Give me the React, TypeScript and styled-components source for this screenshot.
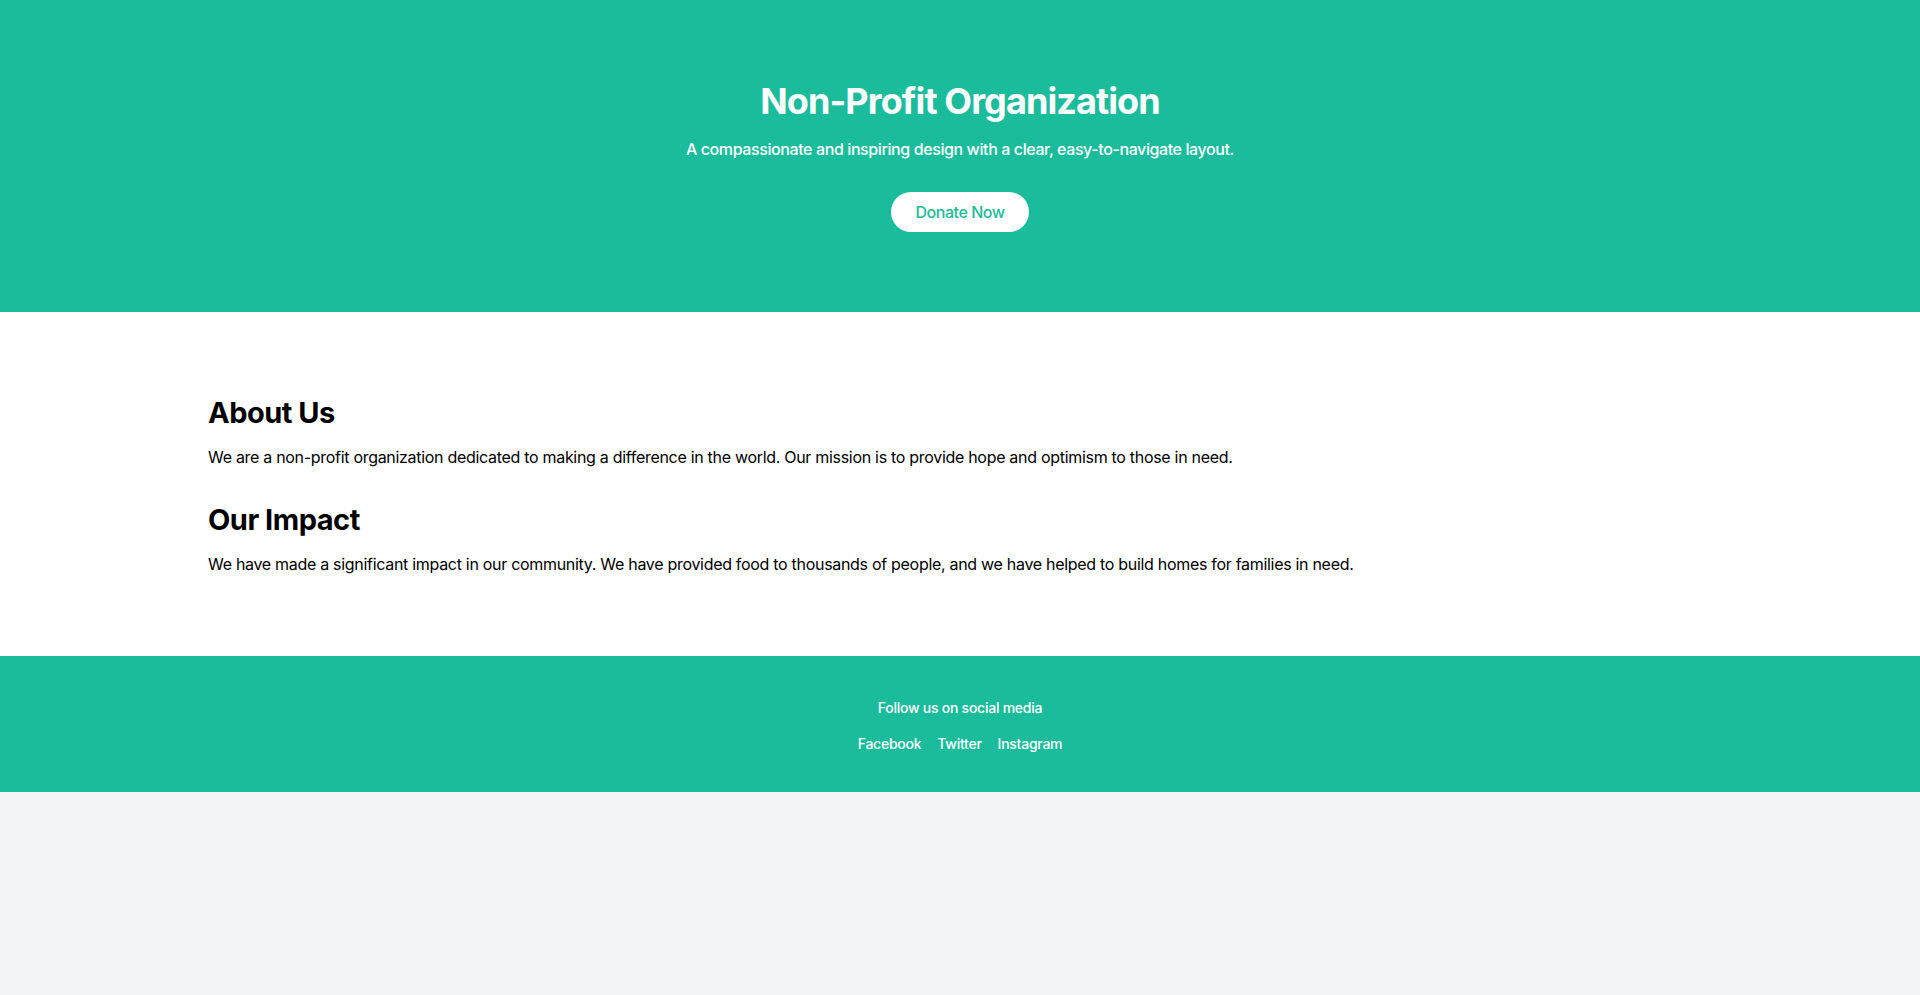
import React from "react";
import styled, { createGlobalStyle } from "styled-components";

const GREEN = "#1abc9c";

const GlobalStyle = createGlobalStyle`
  * { box-sizing: border-box; }
  html, body { margin: 0; padding: 0; }
  body {
    background: #f3f4f6;
    font-family: Inter, "Noto Sans", "Liberation Sans", sans-serif;
    color: #000;
    -webkit-font-smoothing: antialiased;
  }
  h1, h2, p { margin: 0; }
`;

const Hero = styled.header`
  background: ${GREEN};
  color: #fff;
  padding: 81px 16px 80px;
  display: flex;
  flex-direction: column;
  align-items: center;
  text-align: center;
`;

const Title = styled.h1`
  font-size: 36px;
  line-height: 40px;
  font-weight: 700;
  letter-spacing: -0.9px;
  margin-bottom: 16px;
`;

const Subtitle = styled.p`
  font-size: 16px;
  line-height: 24px;
  font-weight: 500;
  letter-spacing: -0.4px;
  margin-bottom: 31px;
`;

const DonateButton = styled.a`
  display: inline-block;
  background: #fff;
  color: ${GREEN};
  font-size: 16px;
  line-height: 24px;
  font-weight: 500;
  letter-spacing: -0.45px;
  padding: 8px 24px;
  border-radius: 9999px;
  text-decoration: none;
  cursor: pointer;
`;

const Main = styled.main`
  background: #fff;
  padding: 83px 0 80px;
`;

const Container = styled.div`
  max-width: 1536px;
  margin: 0 auto;
  padding: 0 16px;
`;

const Section = styled.section<{ $last?: boolean }>`
  margin-bottom: ${(p) => (p.$last ? 0 : 33)}px;
`;

const SectionTitle = styled.h2`
  font-size: 29px;
  line-height: 36px;
  font-weight: 700;
  letter-spacing: -0.5px;
  margin-bottom: 14px;
`;

const Text = styled.p`
  font-size: 16px;
  line-height: 24px;
  letter-spacing: -0.3px;
`;

const Footer = styled.footer`
  background: ${GREEN};
  color: #fff;
  padding: 40px 16px;
  display: flex;
  flex-direction: column;
  align-items: center;
  font-size: 14px;
  line-height: 20px;
  font-weight: 500;
  letter-spacing: -0.25px;
`;

const FooterNote = styled.p`
  margin-top: 2px;
  margin-bottom: -2px;
`;

const SocialRow = styled.nav`
  margin-top: 18px;
  margin-bottom: -2px;
  display: flex;
  gap: 16px;
`;

const SocialLink = styled.a`
  color: #fff;
  text-decoration: none;
`;

export default function App() {
  return (
    <>
      <GlobalStyle />
      <Hero>
        <Title>Non-Profit Organization</Title>
        <Subtitle>A compassionate and inspiring design with a clear, easy-to-navigate layout.</Subtitle>
        <DonateButton>Donate Now</DonateButton>
      </Hero>
      <Main>
        <Container>
          <Section>
            <SectionTitle>About Us</SectionTitle>
            <Text>
              We are a non-profit organization dedicated to making a difference in the world. Our mission is to provide hope and optimism to those in need.
            </Text>
          </Section>
          <Section $last>
            <SectionTitle>Our Impact</SectionTitle>
            <Text>
              We have made a significant impact in our community. We have provided food to thousands of people, and we have helped to build homes for families in need.
            </Text>
          </Section>
        </Container>
      </Main>
      <Footer>
        <FooterNote>Follow us on social media</FooterNote>
        <SocialRow>
          <SocialLink>Facebook</SocialLink>
          <SocialLink>Twitter</SocialLink>
          <SocialLink>Instagram</SocialLink>
        </SocialRow>
      </Footer>
    </>
  );
}
